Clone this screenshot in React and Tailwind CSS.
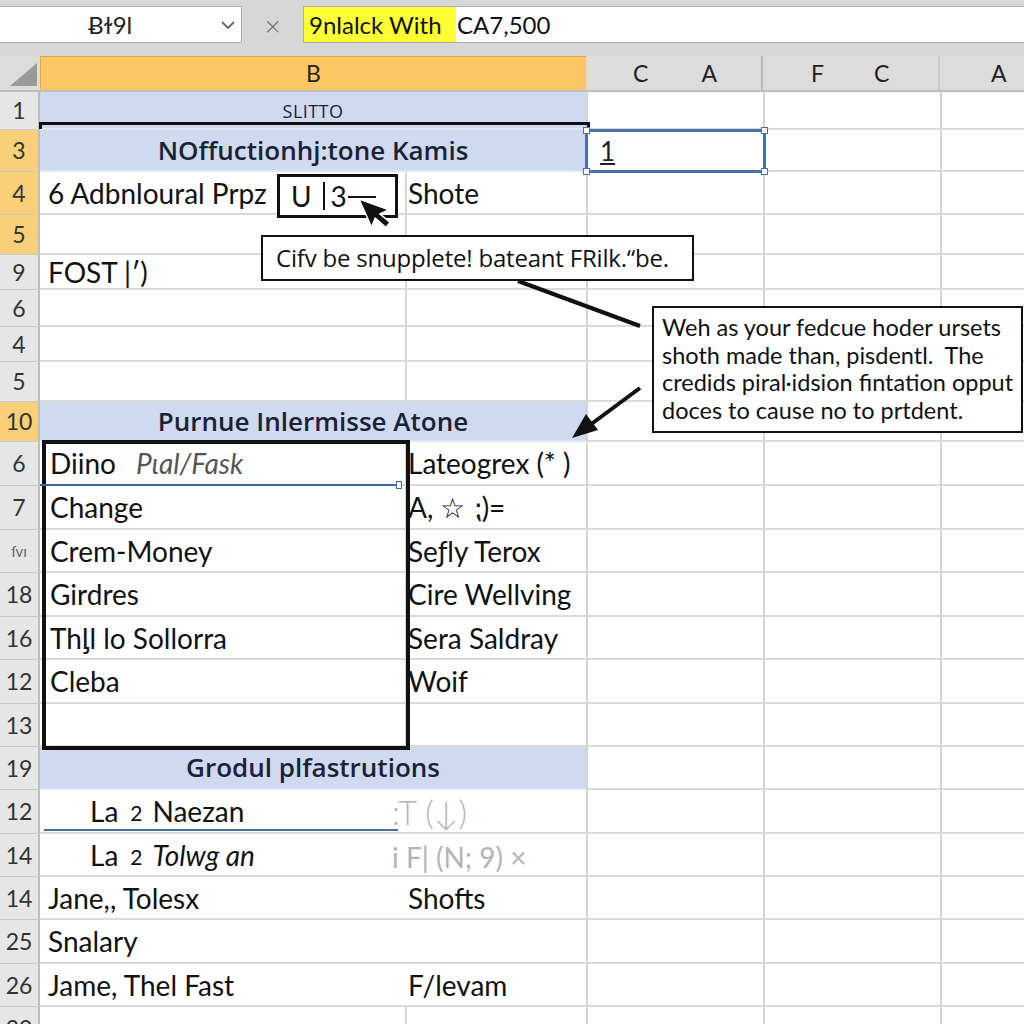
import React from "react";

const rowsTop = [
  { label: "1", h: 38, band: "SLITTO", small: true },
  { label: "3", h: 42, hl: true, band: "NOffuctionhj:tone Kamis" },
  { label: "4", h: 43, hl: true, a: "6 Adbnloural Prpz", b: "Shote" },
  { label: "5", h: 40, hl: true },
  { label: "9", h: 35, a: "FOST |′)" },
  { label: "6", h: 37 },
  { label: "4", h: 35 },
  { label: "5", h: 40 },
  { label: "10", h: 40, hl: true, band: "Purnue Inlermisse Atone" },
  { label: "6", h: 44, a: "Diino", a2: "Pɩal/Fask", b: "Lateogrex (* )", boxed: true },
  { label: "7", h: 44, a: "Change", b: "A,  ☆ ⁏)=", boxed: true },
  { label: "ſvı", h: 43, a: "Crem-Money", b: "Seƒly Terox", boxed: true, odd: true },
  { label: "18", h: 44, a: "Girdres", b: "Cire Wellving", boxed: true },
  { label: "16", h: 43, a: "Thᶅl lo Sollorra", b: "Sera Saldray", boxed: true },
  { label: "12", h: 44, a: "Cleba", b: "Woif", boxed: true },
  { label: "13", h: 43, boxed: true },
  { label: "19", h: 43, band: "Grodul plfastrutions" },
  { label: "12", h: 44, la: "Naezan", grey: ":T (↓)", nosplit: true },
  { label: "14", h: 43, la: "Tolwg an", laItalic: true, grey: "i F| (N; 9) ×", nosplit: true, greySmall: true },
  { label: "14", h: 43, a: "Jane,, Tolesx", b: "Shofts", nosplit: true },
  { label: "25", h: 44, a: "Snalary", nosplit: true },
  { label: "26", h: 43, a: "Jame, Thel Fast", b: "F/levam", nosplit: true },
  { label: "20", h: 44 },
];

function Row({ r }) {
  const rh = r.hl ? "bg-[#f9cf79]" : "bg-[#e6e6e6]";
  return (
    <div className="flex" style={{ height: r.h }}>
      <div
        className={`w-[40px] shrink-0 ${rh} border-r-2 border-b border-r-[#bdbdbd] border-b-[#c9c9c9] flex items-center justify-center text-[#333] ${
          r.odd ? "text-[15px] text-[#666]" : "text-[23px]"
        }`}
      >
        {r.label}
      </div>
      {r.band ? (
        <div
          className={`w-[546px] shrink-0 bg-[#cfdaf1] border-b-2 border-b-[#dfe6f3] flex items-center justify-center text-[#1a2236] ${
            r.small
              ? "text-[18px] tracking-wide font-['Open_Sans',sans-serif] pt-[2px]"
              : "text-[26px] font-semibold font-['Open_Sans',sans-serif]"
          }`}
        >
          {r.band}
        </div>
      ) : r.la ? (
        <div className="w-[546px] shrink-0 border-b-2 border-b-[#dadada] flex items-center relative">
          <span className="pl-[50px] text-[28px] text-[#111]">La</span>
          <span className="pl-[12px] text-[21px] text-[#111] pt-[4px]">2</span>
          <span className={`pl-[10px] text-[28px] text-[#111] ${r.laItalic ? "italic" : ""}`}>{r.la}</span>
          <span
            className={`absolute left-[352px] text-[#b3b3b3] ${
              r.greySmall ? "text-[28px] top-[2px]" : "text-[33px] -top-[2px] font-light"
            }`}
          >
            {r.grey}
          </span>
        </div>
      ) : (
        <>
          <div
            className={`w-[367px] shrink-0 border-b-2 border-b-[#dadada] ${
              r.nosplit ? "" : "border-r-2 border-r-[#d6d6d6]"
            } flex items-center text-[28px] text-[#111] whitespace-nowrap ${r.boxed ? "pl-[10px]" : "pl-[8px]"}`}
          >
            {r.a}
            {r.a2 && <span className="ml-[20px] italic text-[#555]">{r.a2}</span>}
          </div>
          <div className="w-[179px] shrink-0 border-b-2 border-b-[#dadada] flex items-center text-[28px] text-[#111] pl-[1px] whitespace-nowrap">
            {r.b}
          </div>
        </>
      )}
      <div className="w-[177px] shrink-0 border-l-2 border-l-[#d3d3d3] border-b-2 border-b-[#dadada]" />
      <div className="w-[177px] shrink-0 border-l-2 border-l-[#d3d3d3] border-b-2 border-b-[#dadada]" />
      <div className="flex-1 border-l-2 border-l-[#d3d3d3] border-b-2 border-b-[#dadada]" />
    </div>
  );
}

export default function App() {
  return (
    <div className="w-[1024px] h-[1024px] overflow-hidden relative bg-white font-['Lato','Open_Sans',sans-serif] text-[#111]">
      {/* top bar */}
      <div className="h-[56px] bg-[#d7d7d7] flex items-start pt-[6px]">
        <div className="w-[242px] h-[37px] bg-white border border-[#b0b0b0] border-l-0 flex items-center relative">
          <span className="absolute left-[88px] text-[24px] text-[#222]">Ƀɫ9l</span>
          <svg className="absolute left-[220px] top-[12px]" width="16" height="12" viewBox="0 0 16 12">
            <path d="M2 3 L8 9 L14 3" fill="none" stroke="#666" strokeWidth="1.8" />
          </svg>
        </div>
        <div className="w-[61px] h-[37px] flex items-center justify-center text-[28px] text-[#666] font-light">×</div>
        <div className="flex-1 h-[37px] bg-white border border-[#b0b0b0] border-r-0 flex items-stretch text-[24px] text-[#111]">
          <span className="bg-[#ffff33] flex items-center pl-[5px] w-[152px] whitespace-nowrap">9nlalck With</span>
          <span className="flex items-center pl-[1px]">CA7,500</span>
        </div>
      </div>
      {/* column header */}
      <div className="h-[36px] flex bg-[#dcdcdc] border-b-2 border-[#bdbdbd] text-[23px] text-[#222]">
        <div className="w-[40px] shrink-0 relative">
          <svg className="absolute left-[10px] top-[7px]" width="27" height="23" viewBox="0 0 27 23">
            <path d="M27 0 L27 23 L0 23 Z" fill="#9a9a9a" />
          </svg>
        </div>
        <div className="w-[546px] shrink-0 bg-[#fcc865] border-l border-t border-[#e0a84a] flex items-center justify-center">B</div>
        <div className="w-[177px] shrink-0 border-r-2 border-[#b8b8b8] flex items-center">
          <span className="ml-[47px]">C</span>
          <span className="ml-[53px]">A</span>
        </div>
        <div className="w-[177px] shrink-0 border-r-2 border-[#c8c8c8] flex items-center">
          <span className="ml-[48px]">F</span>
          <span className="ml-[50px]">C</span>
        </div>
        <div className="flex-1 flex items-center">
          <span className="ml-[51px]">A</span>
        </div>
      </div>
      {/* rows */}
      <div>
        {rowsTop.map((r, i) => (
          <Row key={i} r={r} />
        ))}
      </div>

      {/* overlays */}
      {/* black line under row 1 */}
      <div className="absolute left-[39px] top-[122px] w-[551px] h-[3px] bg-[#111]" />
      <div className="absolute left-[39px] top-[122px] w-[3px] h-[7px] bg-[#111]" />
      <div className="absolute left-[587px] top-[122px] w-[3px] h-[7px] bg-[#111]" />

      {/* selected cell C3 */}
      <div className="absolute left-[585px] top-[129px] w-[181px] h-[44px] border-[3px] border-[#4a72a8] bg-white">
        <span className="absolute left-[12px] top-[2px] text-[26px] leading-[34px] text-[#222] underline line-through">1</span>
        <div className="absolute -left-[5px] -top-[5px] w-[7px] h-[7px] bg-white border border-[#4a72a8]" />
        <div className="absolute -right-[5px] -top-[5px] w-[7px] h-[7px] bg-white border border-[#4a72a8]" />
        <div className="absolute -left-[5px] -bottom-[5px] w-[7px] h-[7px] bg-white border border-[#4a72a8]" />
        <div className="absolute -right-[5px] -bottom-[5px] w-[7px] h-[7px] bg-white border border-[#4a72a8]" />
      </div>

      {/* box in row 4 */}
      <div className="absolute left-[277px] top-[174px] w-[121px] h-[44px] border-[3px] border-[#111] bg-white flex items-center text-[28px]">
        <span className="ml-[11px] shrink-0">U</span>
        <span className="ml-[11px] shrink-0 w-[2px] h-[28px] bg-[#111]" />
        <span className="ml-[6px] shrink-0">3</span>
        <span className="ml-[1px] shrink-0 w-[28px] h-[2px] bg-[#111] mt-[2px]" />
      </div>
      {/* cursor */}
      <svg className="absolute left-[356px] top-[196px]" width="40" height="46" viewBox="0 0 40 46">
        <g transform="rotate(-24 3 3)">
          <path d="M3 3 L3 34 L10 27 L16 40 L22 37 L16 25 L26 25 Z" fill="#111" stroke="#fff" strokeWidth="1.5" strokeLinejoin="round" />
        </g>
      </svg>

      {/* tooltip */}
      <div className="absolute left-[261px] top-[235px] w-[433px] h-[46px] border-2 border-[#111] bg-white flex items-center pl-[13px] text-[24px] font-['Open_Sans',sans-serif] text-[#111] whitespace-nowrap tracking-[-0.2px]">
        Cifv be snupplete! bateant FRilk.“be.
      </div>

      {/* connector lines */}
      <svg className="absolute left-0 top-0 pointer-events-none" width="1024" height="1024" viewBox="0 0 1024 1024">
        <line x1="518" y1="281" x2="640" y2="326" stroke="#111" strokeWidth="4" />
        <line x1="640" y1="388" x2="590" y2="425" stroke="#111" strokeWidth="4" />
        <path d="M572 438 L586 414 L598 430 Z" fill="#111" />
      </svg>

      {/* big callout */}
      <div className="absolute left-[652px] top-[306px] w-[371px] h-[127px] border-2 border-[#111] bg-white pl-[8px] pt-[6px] text-[23.5px] leading-[27.5px] text-[#111] whitespace-nowrap">
        <div>Weh as your fedcue hoder ursets</div>
        <div>shoth made than, pisdentl.&nbsp; The</div>
        <div>credids piral·idsion fintation opput</div>
        <div>doces to cause no to prtdent.</div>
      </div>

      {/* thick box rows 6-13 */}
      <div className="absolute left-[42px] top-[440px] w-[368px] h-[310px] border-[4px] border-[#111]" />
      {/* blue line row 6 */}
      <div className="absolute left-[40px] top-[484px] w-[362px] h-[2px] bg-[#3d6aa0]" />
      <div className="absolute left-[396px] top-[481px] w-[6px] h-[8px] bg-white border border-[#3d6aa0]" />
      {/* blue line row 12 (second) */}
      <div className="absolute left-[44px] top-[829px] w-[354px] h-[2px] bg-[#4a6f9c]" />
    </div>
  );
}
